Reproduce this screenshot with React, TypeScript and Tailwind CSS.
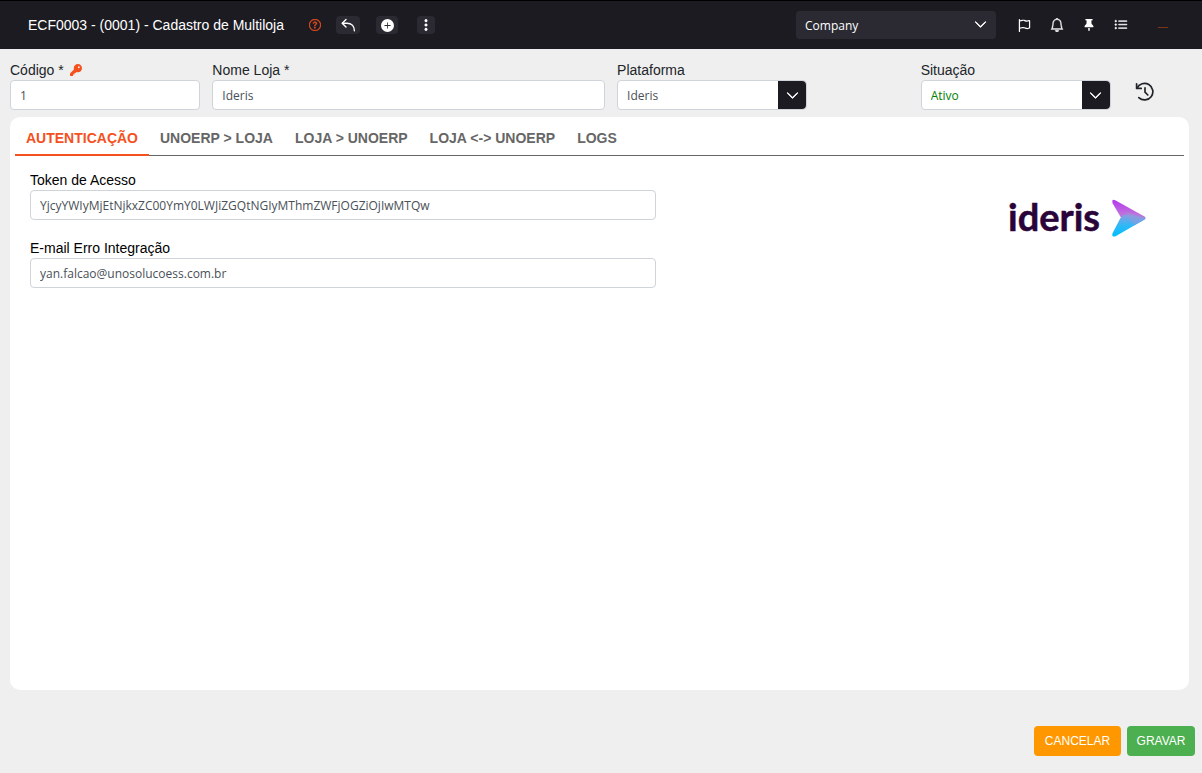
import React, { useState } from 'react';
import { clsx } from 'clsx';
import { BsBell, BsChevronDown, BsListUl, BsPlusCircleFill, BsQuestionCircle, BsThreeDotsVertical } from 'react-icons/bs';
import { FaKey, FaRegFlag, FaThumbtack } from 'react-icons/fa6';

const TABS = ['AUTENTICAÇÃO', 'UNOERP > LOJA', 'LOJA > UNOERP', 'LOJA <-> UNOERP', 'LOGS'];

const inputClass =
  "block w-full h-[30px] px-[9px] rounded border border-[#ced4da] bg-white font-['Open_Sans','Noto_Sans',sans-serif] text-xs outline-none";

const ReplyIcon = () => (
  <svg width="15" height="15" viewBox="0 0 15 15" fill="none" stroke="currentColor" strokeWidth="1.4" strokeLinecap="round" strokeLinejoin="round">
    <path d="M5 1.5 1.2 5.2 5 9" />
    <path d="M1.5 5.2H6c4.5 0 7.4 3 7.4 7.6" />
  </svg>
);

const HistoryIcon = () => (
  <svg width="20" height="20" viewBox="0 0 20 20" fill="none" stroke="currentColor" strokeWidth="1.7" strokeLinecap="round" strokeLinejoin="round">
    <path d="M1.6 1.8V6.4H6.2" />
    <path d="M2 6.2A8.3 8.3 0 1 1 3.8 15.6" />
    <path d="M10 5.8V10.2L12.8 13" />
  </svg>
);

const HeaderButton = ({ label, className, children }: { label: string, className: string, children: React.ReactNode }) => (
  <button type="button" aria-label={label} className={clsx("flex items-center justify-center h-[18px] rounded bg-[#2b2a33] text-white", className)}>
    {children}
  </button>
);

const TextField = ({ id, label, value, icon, className }: { id: string, label: string, value: string, icon?: React.ReactNode, className?: string }) => (
  <div className={className}>
    <label htmlFor={id} className="flex items-center gap-1.5 h-5 text-sm">
      {label}
      {icon}
    </label>
    <input id={id} type="text" defaultValue={value} className={clsx(inputClass, "text-[#495057]")} />
  </div>
);

const SelectField = ({ id, label, options, className, color = "text-[#495057]" }: { id: string, label: string, options: string[], className?: string, color?: string }) => (
  <div className={className}>
    <label htmlFor={id} className="flex items-center h-5 text-sm">{label}</label>
    <div className="relative">
      <select id={id} className={clsx(inputClass, "appearance-none pt-0.5", color)}>
        {options.map((option) => <option key={option}>{option}</option>)}
      </select>
      <span className="absolute right-px inset-y-px w-7 flex items-center justify-center rounded-r bg-[#1c1b22] text-white pointer-events-none">
        <BsChevronDown size={13} stroke="currentColor" strokeWidth={1} />
      </span>
    </div>
  </div>
);

const IderisLogo = () => (
  <svg width="140" height="60" viewBox="0 -6 140 60" role="img" aria-label="ideris">
    <defs>
      <linearGradient id="arrowBack" x1="0" y1="0" x2="0" y2="1">
        <stop offset="0" stopColor="#b537f0" />
        <stop offset="0.55" stopColor="#c070dc" />
        <stop offset="1" stopColor="#7fa4dc" />
      </linearGradient>
      <linearGradient id="arrowFront" x1="0" y1="0" x2="0" y2="1">
        <stop offset="0" stopColor="#8f9be0" />
        <stop offset="0.5" stopColor="#2fb9f6" />
        <stop offset="1" stopColor="#00bfff" />
      </linearGradient>
    </defs>
    <text x="0" y="37" fill="#2a0438" stroke="#2a0438" strokeWidth="0.5" strokeLinejoin="round" className="font-['Lato',sans-serif] font-bold text-[38px]">ideris</text>
    <path d="M107.2 6.2 136.6 22.6Q138.6 24 136.6 25.4L126 31.5 112.6 23 104.6 9.2Q103.4 4.6 107.2 6.2Z" fill="url(#arrowBack)" />
    <path d="M112.6 23.8Q116 19.5 119.5 21L137.4 24.6 136.6 25.4 107.6 42.2Q103.6 43.6 104.4 39.4Z" fill="url(#arrowFront)" />
    <path d="M118 18 137.8 24 126 31Z" fill="#8f9bdc" opacity="0.6" />
  </svg>
);

const Header = () => (
  <header className="flex items-center h-[49px] border-t border-black bg-[#1c1b22] pl-7 pr-[34px] text-white">
    <h1 className="text-sm">ECF0003 - (0001) - Cadastro de Multiloja</h1>
    <button type="button" aria-label="Ajuda" className="ml-[25px] text-[#f4511e]">
      <BsQuestionCircle size={12} stroke="currentColor" strokeWidth={0.5} />
    </button>
    <HeaderButton label="Voltar" className="ml-[15px] w-6"><ReplyIcon /></HeaderButton>
    <HeaderButton label="Adicionar" className="ml-4 w-[22px]"><BsPlusCircleFill size={13} /></HeaderButton>
    <HeaderButton label="Mais opções" className="ml-[19px] w-[18px]"><BsThreeDotsVertical size={14} stroke="currentColor" strokeWidth={0.5} /></HeaderButton>

    <div className="relative ml-auto w-[200px]">
      <select aria-label="Empresa" className="block w-full h-7 pl-[9px] pt-0.5 rounded appearance-none bg-[#2b2a33] font-['Open_Sans','Noto_Sans',sans-serif] text-xs font-medium text-white outline-none">
        <option>Company</option>
      </select>
      <BsChevronDown size={13} stroke="currentColor" strokeWidth={1} className="absolute right-[9px] top-[7px] pointer-events-none" />
    </div>

    <nav className="flex items-center gap-[19px] ml-[22px]">
      <button type="button" aria-label="Marcadores"><FaRegFlag size={13} /></button>
      <button type="button" aria-label="Notificações"><BsBell size={14} stroke="currentColor" strokeWidth={0.4} /></button>
      <button type="button" aria-label="Fixar"><FaThumbtack size={12} /></button>
      <button type="button" aria-label="Lista"><BsListUl size={14} stroke="currentColor" strokeWidth={0.6} /></button>
    </nav>
    <span className="ml-[30px] w-[10px] h-px mt-1 bg-[#7a3519]" />
  </header>
);

export default function App() {
  const [active, setActive] = useState(0);

  return (
    <div className="flex flex-col min-h-screen bg-[#efefef] font-['Liberation_Sans',Arial,sans-serif] text-[#212529]">
      <Header />

      <div className="flex pl-[10px] pt-[11px]">
        <div className="flex-1 grid grid-cols-11 gap-x-3">
          <TextField id="codigo" label="Código *" value="1" className="col-span-2" icon={<FaKey size={12} className="text-[#f4511e]" />} />
          <TextField id="nome" label="Nome Loja *" value="Ideris" className="col-span-4" />
          <SelectField id="plataforma" label="Plataforma" options={['Ideris']} className="col-span-2" />
          <SelectField id="situacao" label="Situação" options={['Ativo', 'Inativo']} className="col-start-10 col-span-2" color="text-[#008000]" />
        </div>
        <div className="w-[91px] pl-6 pt-[22px]">
          <button type="button" aria-label="Histórico" className="block"><HistoryIcon /></button>
        </div>
      </div>

      <main className="flex-1 mt-[7px] ml-[10px] mr-[13px] px-[5px] rounded-[10px] bg-white text-black">
        <div role="tablist" className="flex h-[39px] border-b border-[#666]">
          {TABS.map((tab, i) => (
            <button
              key={tab}
              type="button"
              role="tab"
              aria-selected={i === active}
              onClick={() => setActive(i)}
              className={clsx(
                "h-[39px] px-[11px] pt-1 border-b-2 text-sm font-bold",
                i === active ? "border-[#f4511e] text-[#f4511e]" : "border-transparent text-[#666]"
              )}
            >
              {tab}
            </button>
          ))}
        </div>

        <div className="flex items-start justify-between pl-[15px] pr-9 pt-[14px]">
          <div className="w-[56%] flex flex-col gap-[18px]">
            <TextField id="token" label="Token de Acesso" value="YjcyYWIyMjEtNjkxZC00YmY0LWJiZGQtNGIyMThmZWFjOGZiOjIwMTQw" />
            <TextField id="email" label="E-mail Erro Integração" value="yan.falcao@unosolucoess.com.br" />
          </div>
          <div className="mt-[18px]"><IderisLogo /></div>
        </div>
      </main>

      <footer className="flex justify-end gap-1.5 pt-9 pb-[17px] pr-[7px] text-xs text-white">
        <button type="button" className="h-[30px] w-[87px] rounded bg-[#ff9800]">CANCELAR</button>
        <button type="button" className="h-[30px] w-[68px] rounded bg-[#4caf50]">GRAVAR</button>
      </footer>
    </div>
  );
}
